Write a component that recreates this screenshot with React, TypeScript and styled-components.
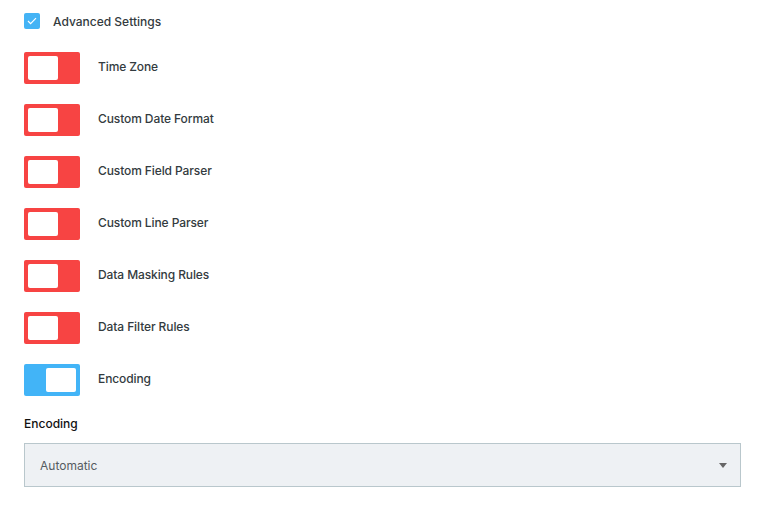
import { createGlobalStyle } from 'styled-components';
import styled from 'styled-components';
import { useState } from 'react';

const GlobalStyle = createGlobalStyle`
  body {
    margin: 0;
    background: #ffffff;
    font-family: Inter, 'Liberation Sans', sans-serif;
    color: #333b40;
  }
`;

const Page = styled.div`
  padding: 13px 22px 0 24px;
  display: flex;
  flex-direction: column;
`;

const CheckRow = styled.label`
  display: flex;
  align-items: center;
  gap: 13px;
  height: 16px;
  font-size: 12px;
  font-weight: 500;
  margin-bottom: 23px;
`;

const CheckBox = styled.span`
  width: 16px;
  height: 16px;
  border-radius: 2px;
  background: #44b3f5;
  display: flex;
  align-items: center;
  justify-content: center;
`;

const ToggleList = styled.div`
  display: flex;
  flex-direction: column;
  gap: 20px;
`;

const ToggleRow = styled.div`
  display: flex;
  align-items: center;
  gap: 18px;
  font-size: 12px;
  font-weight: 500;
  letter-spacing: -0.1px;
  line-height: 14px;
  padding-bottom: 0;
`;

const Label = styled.span`
  margin-top: -2px;
`;

const Track = styled.button<{ on: boolean }>`
  width: 56px;
  height: 32px;
  padding: 4px;
  border: none;
  border-radius: 2px;
  background: ${p => (p.on ? '#42b4f7' : '#f74443')};
  display: flex;
  justify-content: ${p => (p.on ? 'flex-end' : 'flex-start')};
  cursor: pointer;
`;

const Knob = styled.span`
  width: 30px;
  height: 24px;
  border-radius: 2px;
  background: #ffffff;
`;

const FieldLabel = styled.div`
  margin-top: 20px;
  font-size: 12px;
  font-weight: 500;
  color: #111;
`;

const Select = styled.div`
  margin-top: 12px;
  height: 42px;
  border: 1px solid #b9c7cc;
  background: #eef1f4;
  display: flex;
  align-items: center;
  justify-content: space-between;
  padding: 0 13px 0 15px;
  font-size: 12px;
  color: #555c61;
`;

const Caret = styled.span`
  width: 0;
  height: 0;
  border-left: 4px solid transparent;
  border-right: 4px solid transparent;
  border-top: 5px solid #666;
`;

const settings = [
  { label: 'Time Zone', on: false },
  { label: 'Custom Date Format', on: false },
  { label: 'Custom Field Parser', on: false },
  { label: 'Custom Line Parser', on: false },
  { label: 'Data Masking Rules', on: false },
  { label: 'Data Filter Rules', on: false },
  { label: 'Encoding', on: true },
];

export default function App() {
  const [state, setState] = useState(settings);
  return (
    <>
      <GlobalStyle />
      <Page>
        <CheckRow>
          <CheckBox>
            <svg width="10" height="8" viewBox="0 0 10 8" fill="none">
              <path d="M1 4l2.6 2.6L9 1.2" stroke="#fff" strokeWidth="1.2" />
            </svg>
          </CheckBox>
          Advanced Settings
        </CheckRow>
        <ToggleList>
          {state.map((s, i) => (
            <ToggleRow key={s.label}>
              <Track
                on={s.on}
                onClick={() =>
                  setState(state.map((x, j) => (j === i ? { ...x, on: !x.on } : x)))
                }
              >
                <Knob />
              </Track>
              <Label>{s.label}</Label>
            </ToggleRow>
          ))}
        </ToggleList>
        <FieldLabel>Encoding</FieldLabel>
        <Select>
          Automatic
          <Caret />
        </Select>
      </Page>
    </>
  );
}
